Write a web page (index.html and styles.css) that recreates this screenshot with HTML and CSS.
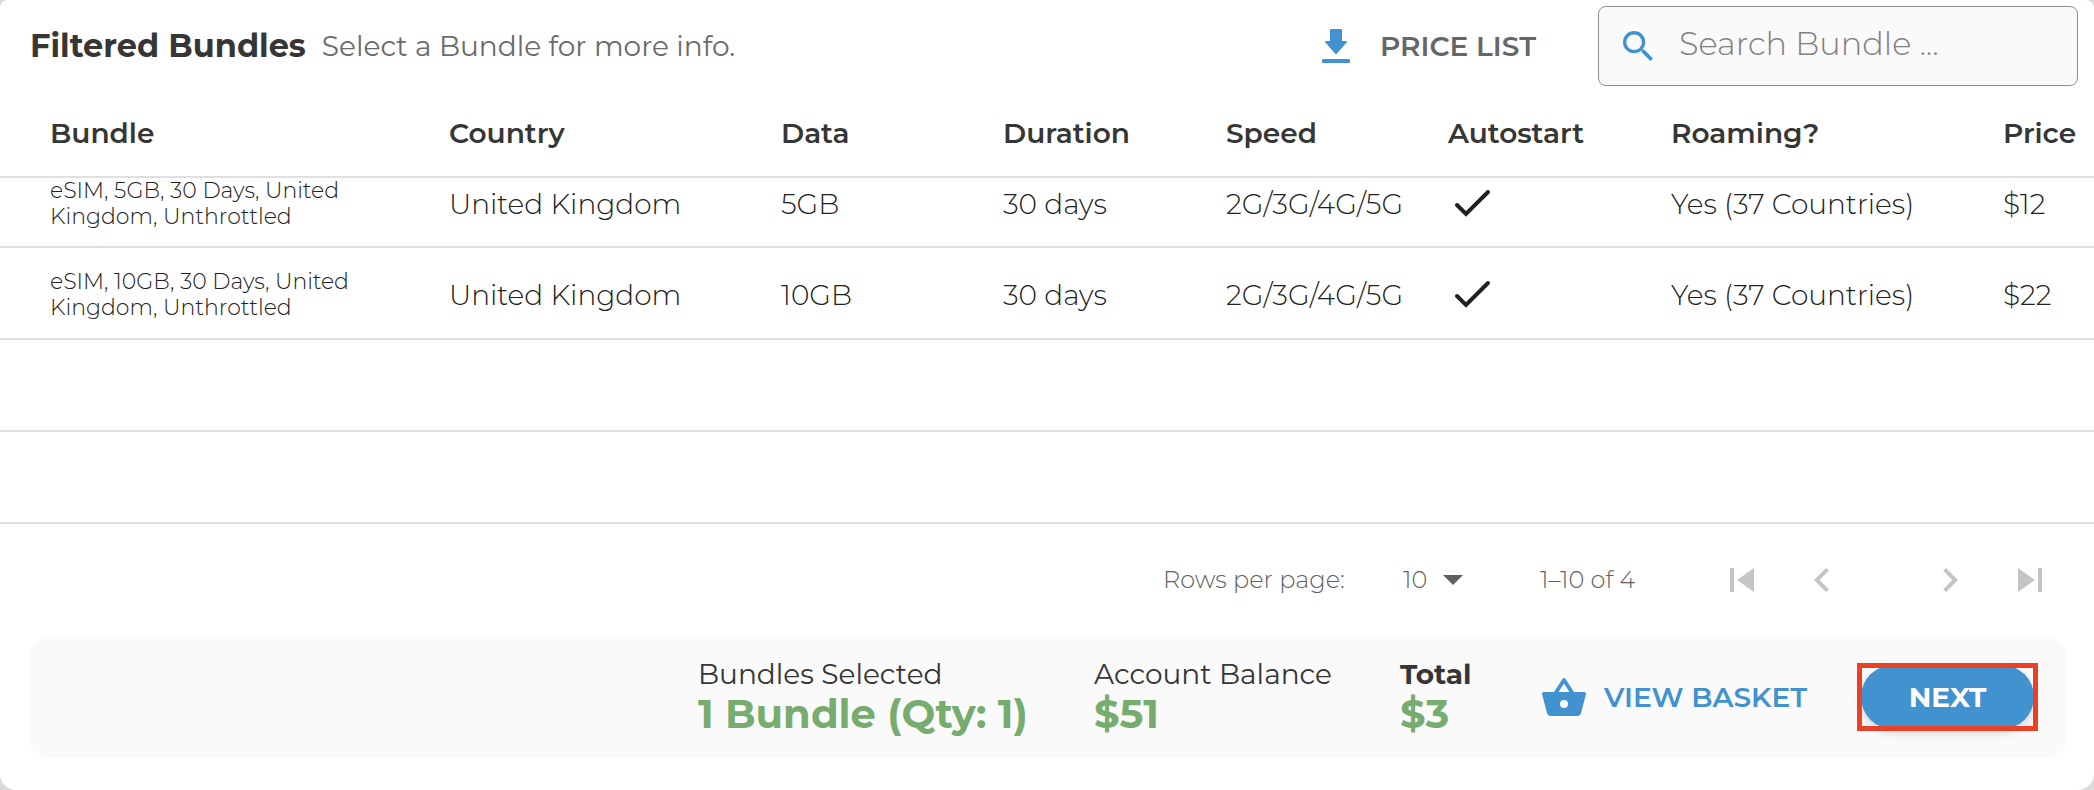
FILE: index.html
```html
<!DOCTYPE html>
<html lang="en">
<head>
<meta charset="utf-8">
<meta name="viewport" content="width=device-width, initial-scale=1">
<title>Filtered Bundles</title>
<link rel="stylesheet" href="styles.css">
</head>
<body>
<main class="card">
  <header class="toolbar">
    <h1 class="title">Filtered Bundles</h1>
    <p class="subtitle">Select a Bundle for more info.</p>
    <button class="price-list" type="button">
      <svg class="download-icon" viewBox="0 0 28 34" aria-hidden="true"><path d="M8 1a1 1 0 0 1 1-1h10a1 1 0 0 1 1 1v11h4q2 0 .6 1.600L15 24.500q-1 1-2 0L3.400 13.600Q2 12 4 12h4z"/><rect y="30" width="28" height="4" rx="1"/></svg>
      <span>PRICE LIST</span>
    </button>
    <label class="search">
      <svg class="search-icon" viewBox="3 3 17.500 17.500" aria-hidden="true"><path d="M15.500 14h-.79l-.28-.27A6.471 6.471 0 0 0 16 9.500 6.500 6.500 0 1 0 9.500 16c1.610 0 3.090-.59 4.230-1.570l.27.28v.79l5 4.990L20.490 19l-4.990-5zm-6 0C7.010 14 5 11.990 5 9.500S7.010 5 9.500 5 14 7.010 14 9.500 11.990 14 9.500 14z"/></svg>
      <input class="search-input" type="text" placeholder="Search Bundle ..." aria-label="Search Bundle">
    </label>
  </header>

  <table class="bundles">
    <colgroup>
      <col class="col-bundle"><col class="col-wide"><col class="col-slim"><col class="col"><col class="col-slim"><col class="col"><col class="col-wide"><col>
    </colgroup>
    <thead>
      <tr><th>Bundle</th><th>Country</th><th>Data</th><th>Duration</th><th>Speed</th><th>Autostart</th><th>Roaming?</th><th>Price</th></tr>
    </thead>
    <tbody>
      <tr class="scrolled">
        <td class="name">eSIM, 5GB, 30 Days, United Kingdom, Unthrottled</td><td>United Kingdom</td><td>5GB</td><td>30 days</td><td>2G/3G/4G/5G</td>
        <td><svg class="check" viewBox="0 0 48 48" role="img" aria-label="Yes"><path d="M9 25l9 9L40 12"/></svg></td>
        <td>Yes (37 Countries)</td><td>$12</td>
      </tr>
      <tr>
        <td class="name">eSIM, 10GB, 30 Days, United Kingdom, Unthrottled</td><td>United Kingdom</td><td>10GB</td><td>30 days</td><td>2G/3G/4G/5G</td>
        <td><svg class="check" viewBox="0 0 48 48" role="img" aria-label="Yes"><path d="M9 25l9 9L40 12"/></svg></td>
        <td>Yes (37 Countries)</td><td>$22</td>
      </tr>
      <tr><td colspan="8"></td></tr>
      <tr><td colspan="8"></td></tr>
    </tbody>
  </table>

  <nav class="pagination" aria-label="Pagination">
    <label class="rows-label" for="rows">Rows per page:</label>
    <span class="rows-box">
      <select class="rows" id="rows"><option>10</option><option>20</option></select>
      <svg class="caret" viewBox="0 0 20 10" aria-hidden="true"><path d="M0 0h20L10 10z"/></svg>
    </span>
    <span class="range">1–10 of 4</span>
    <span class="pager">
      <button class="page" type="button" aria-label="First page"><svg viewBox="0 0 24 24"><path d="M6 6h2v12H6zm3.500 6l8.500 6V6z"/></svg></button>
      <button class="page" type="button" aria-label="Previous page"><svg viewBox="0 0 24 24"><path d="M15.410 7.410L14 6l-6 6 6 6 1.410-1.410L10.830 12z"/></svg></button>
    </span>
    <span class="pager">
      <button class="page" type="button" aria-label="Next page"><svg viewBox="0 0 24 24"><path d="M10 6L8.590 7.410 13.170 12l-4.580 4.590L10 18l6-6z"/></svg></button>
      <button class="page" type="button" aria-label="Last page"><svg viewBox="0 0 24 24"><path d="M6 18l8.500-6L6 6v12zM16 6v12h2V6h-2z"/></svg></button>
    </span>
  </nav>

  <footer class="summary">
    <div class="stat"><span>Bundles Selected</span><strong class="amount">1 Bundle (Qty: 1)</strong></div>
    <div class="stat"><span>Account Balance</span><strong class="amount">$51</strong></div>
    <div class="stat"><b class="total">Total</b><strong class="amount">$3</strong></div>
    <button class="basket" type="button">
      <svg class="basket-icon" viewBox="0 0 44 38" aria-hidden="true"><path fill-rule="evenodd" d="M1.500 14H12L20.500 1q1.500-2 3 0L32 14h10.500q1.500 0 1.500 2l-5 19q-.8 3-3.500 3h-27Q5.800 38 5 35L0 16q0-2 1.500-2zM16.500 14h11L22 5.500zM22 22a4 4 0 1 0 0 8 4 4 0 0 0 0-8z"/></svg>
      <span>VIEW BASKET</span>
    </button>
    <div class="highlight"><button class="next" type="button">NEXT</button></div>
  </footer>
</main>
</body>
</html>
```
FILE: styles.css
```css
* { box-sizing: border-box; }

body {
  margin: 0;
  background: #d9dadb;
  color: #212121;
  font: 300 28px/36px Montserrat, Inter, sans-serif;
}

button, input, select {
  border: 0;
  padding: 0;
  background: none;
  color: inherit;
  font: inherit;
}

button { cursor: pointer; }

.card {
  display: flex;
  flex-direction: column;
  min-height: 100vh;
  padding-bottom: 32px;
  background: #fff;
  border-radius: 8px 8px 16px 16px;
}

.toolbar {
  display: flex;
  align-items: center;
  gap: 16px;
  padding: 6px 16px 0 30px;
}

.title {
  margin: 0;
  color: #363636;
  font-size: 32px;
  font-weight: 700;
}

.subtitle {
  margin: 0;
  color: #6b6b6b;
  font-weight: 400;
}

.price-list {
  display: flex;
  align-items: center;
  gap: 30px;
  margin-left: auto;
  margin-right: 46px;
  color: #666;
  font-weight: 600;
}

.download-icon { width: 28px; height: 34px; fill: #4292d0; }

.search {
  display: flex;
  align-items: center;
  gap: 26px;
  width: 480px;
  height: 80px;
  padding: 0 24px;
  border: 1px solid #8f8f8f;
  border-radius: 8px;
  background: #fafafa;
}

.search-icon { width: 30px; height: 30px; fill: #4292d0; }

.search-input {
  flex: 1;
  min-width: 0;
  height: 48px;
  padding-bottom: 6px;
  font-size: 32px;
  outline: 0;
}

.search-input::placeholder { color: #808080; opacity: 1; }

.bundles {
  width: 100%;
  table-layout: fixed;
  border-collapse: separate;
  border-spacing: 0;
}

.col-bundle { width: 417px; }
.col-wide { width: 332px; }
.col { width: 223px; }
.col-slim { width: 222px; }

.bundles th {
  height: 92px;
  padding: 4px 0 0 32px;
  border-bottom: 2px solid #e0e0e0;
  color: #363636;
  font-weight: 600;
  text-align: left;
}

.bundles td {
  height: 92px;
  padding: 4px 0 0 32px;
  border-bottom: 2px solid #e0e0e0;
  white-space: nowrap;
}

.bundles th:first-child,
.bundles td:first-child { padding-left: 50px; }

.bundles .scrolled td {
  height: 70px;
  padding-top: 0;
  padding-bottom: 16px;
}

.bundles .name {
  padding-right: 32px;
  font-size: 22px;
  line-height: 26px;
  white-space: normal;
}

.check {
  display: block;
  width: 48px;
  height: 48px;
  fill: none;
  stroke: #212121;
  stroke-width: 4;
  stroke-linecap: round;
}

.pagination {
  display: flex;
  align-items: center;
  justify-content: flex-end;
  height: 112px;
  padding-right: 40px;
  color: #616161;
  font-size: 24px;
}

.rows-label { width: 240px; }

.rows-box {
  display: flex;
  align-items: center;
  width: 137px;
  position: relative;
}

.rows { width: 62px; appearance: none; }

.caret {
  position: absolute;
  left: 40px;
  width: 20px;
  height: 10px;
  fill: #5f5f5f;
  pointer-events: none;
}

.range { width: 178px; }

.pager { display: flex; gap: 32px; }
.pager + .pager { margin-left: 80px; }

.page { width: 48px; height: 48px; }
.page svg { display: block; fill: #c4c4c4; }

.summary {
  display: grid;
  grid-template-columns: 396px 306px 142px 315px 181px;
  justify-content: end;
  align-items: center;
  height: 122px;
  margin: 0 28px 0 30px;
  padding-right: 28px;
  border-radius: 20px;
  background: #fafafa;
}

.stat {
  display: flex;
  flex-direction: column;
  padding-bottom: 2px;
  color: #363636;
  font-weight: 400;
}

.total { font-weight: 700; }

.amount {
  color: #76ac6e;
  font-size: 40px;
  line-height: 44px;
}

.basket {
  display: flex;
  align-items: center;
  gap: 18px;
  color: #4292d0;
  font-weight: 600;
}

.basket-icon { width: 44px; height: 38px; fill: #4292d0; }

.highlight {
  position: relative;
  height: 68px;
  padding: 2px 4px;
}

.highlight::after {
  content: "";
  position: absolute;
  inset: 0;
  border: 5px solid #ea4025;
  pointer-events: none;
}

.next {
  display: block;
  width: 100%;
  height: 100%;
  border-radius: 32px;
  background: #4292d0;
  box-shadow: 0 4px 8px #00000026;
  color: #fff;
  font-weight: 700;
}
```
